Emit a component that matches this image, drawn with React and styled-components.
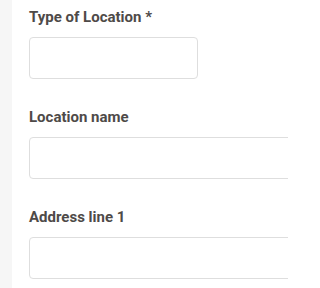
import React from 'react'
import styled, { createGlobalStyle } from 'styled-components'

const GlobalStyle = createGlobalStyle`
    html, body {
        margin: 0;
        padding: 0;
        background: #ffffff;
        overflow: hidden;
    }
    body {
        font-family: Roboto, 'Liberation Sans', sans-serif;
    }
`

const Page = styled('div')({
    display: 'flex',
    width: '288px',
    height: '288px',
    overflow: 'hidden',
})

const SideStrip = styled('div')({
    flex: '0 0 12px',
    backgroundColor: '#f6f6f6',
})

const Form = styled('form')({
    display: 'flex',
    flexDirection: 'column',
    gap: '28px',
    padding: '7px 0 0 17px',
    flex: '1 0 auto',
})

const Field = styled('div')({
    display: 'flex',
    flexDirection: 'column',
    gap: '10px',
})

const Label = styled('label')({
    fontSize: '15px',
    lineHeight: '20px',
    fontWeight: 700,
    color: '#4e4a48',
})

const Input = styled('input')({
    boxSizing: 'border-box',
    height: '42px',
    width: (props) => (props.$short ? '169px' : '320px'),
    border: '1px solid #dedede',
    borderRadius: '4px',
    backgroundColor: '#ffffff',
    padding: '0 12px',
    fontFamily: 'inherit',
    fontSize: '14px',
    outline: 'none',
})

const fields = [
    { label: 'Type of Location *', short: true },
    { label: 'Location name' },
    { label: 'Address line 1' },
]

function App() {
    return (
        <>
            <GlobalStyle />
            <Page>
                <SideStrip />
                <Form>
                    {fields.map((f) => (
                        <Field key={f.label}>
                            <Label>{f.label}</Label>
                            <Input $short={f.short} />
                        </Field>
                    ))}
                </Form>
            </Page>
        </>
    )
}

export default App
